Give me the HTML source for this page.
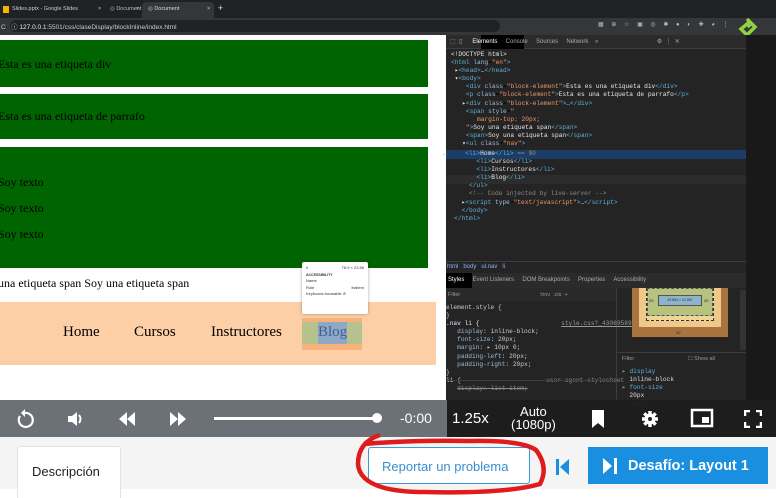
<!DOCTYPE html>
<html><head><meta charset="utf-8">
<style>
*{margin:0;padding:0;box-sizing:border-box}
body{width:776px;height:498px;overflow:hidden;background:#1f1f1f;font-family:"Liberation Sans",sans-serif;position:relative}
.a{position:absolute}
.mono{font-family:"Liberation Mono",monospace;font-size:6.2px;white-space:pre;line-height:8.1px}
.serif{font-family:"Liberation Serif",serif;color:#000}
.g{background:#006400}
.tag{color:#5db0d7}.at{color:#9bbbdc}.val{color:#f29766}.txt{color:#e8e8e8}.cm{color:#898989}
</style></head><body>
<!-- tab bar -->
<div class="a" style="left:0;top:0;width:776px;height:18px;background:#202124"></div>
<div class="a" style="left:142px;top:2px;width:72px;height:16px;background:#35363a;border-radius:4px 4px 0 0"></div>
<div class="a" style="left:3px;top:6px;width:6px;height:7px;background:#f4b400"></div>
<div class="a" style="left:12px;top:6px;font-size:5.5px;color:#ccc;white-space:pre">Slides.pptx - Google Slides</div>
<div class="a" style="left:98px;top:6px;font-size:5.5px;color:#ccc">×</div>
<div class="a" style="left:110px;top:6px;font-size:5.5px;color:#bbb;white-space:pre">◎ Document</div>
<div class="a" style="left:136px;top:6px;font-size:5.5px;color:#bbb">×</div>
<div class="a" style="left:148px;top:6px;font-size:5.5px;color:#ddd;white-space:pre">◎ Document</div>
<div class="a" style="left:207px;top:6px;font-size:5.5px;color:#ddd">×</div>
<div class="a" style="left:218px;top:3px;font-size:9px;color:#ddd">+</div>
<div class="a" style="left:0;top:18px;width:776px;height:17px;background:#35363a"></div>
<div class="a" style="left:10px;top:20px;width:490px;height:12px;background:#202124;border-radius:6px"></div>
<div class="a" style="left:1px;top:21px;font-size:6.5px;color:#ccc;white-space:pre">C   ⓘ <span style="color:#eee">127.0.0.1</span>:5501/css/claseDisplay/blockInline/index.html</div>
<div class="a" style="left:598px;top:21px;font-size:6px;color:#bbb;letter-spacing:3px">▦ ⊕ ☆ ▣ ◎ ✱ ● ◐ ✚ ◕ ⋮</div>
<svg class="a" style="left:736px;top:16px" width="22" height="26" viewBox="0 0 22 26"><path d="M11 3 L19 11 L11 19 L5 13 L11 8 L14 11" fill="none" stroke="#8fd13f" stroke-width="3.5"/></svg>
<!-- page -->
<div class="a" style="left:0;top:35px;width:446px;height:365px;background:#fff"></div>
<div class="a g" style="left:0;top:40px;width:428px;height:47px"></div>
<div class="a g" style="left:0;top:94px;width:428px;height:45px"></div>
<div class="a g" style="left:0;top:147px;width:428px;height:121px"></div>
<div class="a serif" style="left:-2px;top:57px;font-size:12px">Esta es una etiqueta div</div>
<div class="a serif" style="left:-2px;top:109px;font-size:12px">Esta es una etiqueta de parrafo</div>
<div class="a serif" style="left:-2px;top:175px;font-size:12px">Soy texto</div>
<div class="a serif" style="left:-2px;top:201px;font-size:12px">Soy texto</div>
<div class="a serif" style="left:-2px;top:227px;font-size:12px">Soy texto</div>
<div class="a serif" style="left:-2px;top:276px;font-size:12px">una etiqueta span Soy una etiqueta span</div>
<div class="a" style="left:0;top:302px;width:436px;height:63px;background:#fdcfa7"></div>
<div class="a" style="left:302px;top:318px;width:60px;height:32px;background:#f6b27a"></div>
<div class="a" style="left:302px;top:322px;width:60px;height:22px;background:#b5c28d"></div>
<div class="a" style="left:318px;top:322px;width:29px;height:22px;background:#8ea8c6"></div>
<div class="a serif" style="left:63px;top:324px;font-size:15px">Home</div>
<div class="a serif" style="left:134px;top:324px;font-size:15px">Cursos</div>
<div class="a serif" style="left:211px;top:324px;font-size:15px">Instructores</div>
<div class="a serif" style="left:318px;top:324px;font-size:15px;color:#3c5f8f">Blog</div>
<div class="a" style="left:302px;top:262px;width:66px;height:52px;background:#fff;box-shadow:0 0 3px rgba(0,0,0,.35);border-radius:2px;font-size:4px;color:#333;padding:3px 4px;line-height:6.5px">li<span style="float:right">78.9 × 22.86</span><br><b style="font-size:3.5px">ACCESSIBILITY</b><br>Name<br>Role<span style="float:right">listitem</span><br>Keyboard-focusable ⊘</div>
<!-- devtools -->
<div class="a" style="left:446px;top:35px;width:300px;height:365px;background:#242424"></div>
<div class="a" style="left:446px;top:35px;width:300px;height:14px;background:#2b2b2b;border-bottom:1px solid #3d3d3d"></div>
<div class="a" style="left:481px;top:35px;width:43px;height:14px;background:#000"></div>
<div class="a" style="left:450px;top:38px;font-size:6px;color:#aaa;white-space:pre">⬚  ▯      <span style="color:#fff">Elements</span>     Console     Sources     Network    »                                   ⚙  ⋮  ✕</div>
<div class="a mono" style="left:451px;top:51px"><span class="txt">&lt;!DOCTYPE html&gt;</span>
<span class="tag">&lt;html</span> <span class="at">lang</span>=<span class="val">"en"</span><span class="tag">&gt;</span>
 <span class="txt">▸</span><span class="tag">&lt;head&gt;</span><span class="txt">…</span><span class="tag">&lt;/head&gt;</span>
 <span class="txt">▾</span><span class="tag">&lt;body&gt;</span>
    <span class="tag">&lt;div</span> <span class="at">class</span>=<span class="val">"block-element"</span><span class="tag">&gt;</span><span class="txt">Esta es una etiqueta div</span><span class="tag">&lt;/div&gt;</span>
    <span class="tag">&lt;p</span> <span class="at">class</span>=<span class="val">"block-element"</span><span class="tag">&gt;</span><span class="txt">Esta es una etiqueta de parrafo</span><span class="tag">&lt;/p&gt;</span>
   <span class="txt">▸</span><span class="tag">&lt;div</span> <span class="at">class</span>=<span class="val">"block-element"</span><span class="tag">&gt;</span><span class="txt">…</span><span class="tag">&lt;/div&gt;</span>
    <span class="tag">&lt;span</span> <span class="at">style</span>=<span class="val">"</span>
       <span class="val">margin-top: 20px;</span>
    <span class="val">"</span><span class="tag">&gt;</span><span class="txt">Soy una etiqueta span</span><span class="tag">&lt;/span&gt;</span>
    <span class="tag">&lt;span&gt;</span><span class="txt">Soy una etiqueta span</span><span class="tag">&lt;/span&gt;</span>
   <span class="txt">▾</span><span class="tag">&lt;ul</span> <span class="at">class</span>=<span class="val">"nav"</span><span class="tag">&gt;</span></div>
<div class="a" style="left:446px;top:150px;width:300px;height:8.5px;background:#1c3d66"></div>
<div class="a" style="left:446px;top:175px;width:300px;height:8.5px;background:#2c2c2c"></div>
<div class="a mono" style="left:443px;top:150px"><span class="cm">…</span>     <span class="tag">&lt;li&gt;</span><span class="txt">Home</span><span class="tag">&lt;/li&gt;</span> <span class="cm">== $0</span>
         <span class="tag">&lt;li&gt;</span><span class="txt">Cursos</span><span class="tag">&lt;/li&gt;</span>
         <span class="tag">&lt;li&gt;</span><span class="txt">Instructores</span><span class="tag">&lt;/li&gt;</span>
         <span class="tag">&lt;li&gt;</span><span class="txt">Blog</span><span class="tag">&lt;/li&gt;</span>
       <span class="tag">&lt;/ul&gt;</span>
       <span class="cm">&lt;!-- Code injected by live-server --&gt;</span>
     <span class="txt">▸</span><span class="tag">&lt;script</span> <span class="at">type</span>=<span class="val">"text/javascript"</span><span class="tag">&gt;</span><span class="txt">…</span><span class="tag">&lt;/script&gt;</span>
     <span class="tag">&lt;/body&gt;</span>
   <span class="tag">&lt;/html&gt;</span></div>
<div class="a" style="left:446px;top:261px;width:300px;height:1px;background:#3d3d3d"></div>
<div class="a" style="left:447px;top:264px;font-size:6px;color:#8ab4f8;white-space:pre">html   body   ul.nav   li</div>
<div class="a" style="left:446px;top:273px;width:300px;height:15px;background:#2b2b2b"></div>
<div class="a" style="left:446px;top:273px;width:26px;height:15px;background:#000"></div>
<div class="a" style="left:448px;top:277px;font-size:6px;color:#aaa;white-space:pre"><span style="color:#fff">Styles</span>     Event Listeners     DOM Breakpoints     Properties     Accessibility</div>
<div class="a" style="left:616px;top:288px;width:1px;height:112px;background:#3d3d3d"></div>
<div class="a" style="left:446px;top:288px;width:170px;height:13px;background:#292929"></div>
<div class="a" style="left:448px;top:292px;font-size:5.5px;color:#999;white-space:pre">Filter                                                    :hov  .cls  +</div>
<div class="a mono" style="left:446px;top:304px;color:#ccc">element.style {
}
<span class="txt">.nav li {</span>                      <span style="color:#999;text-decoration:underline">style.css?_43069589:13</span>
   <span style="color:#9bbbdc">display</span>: inline-block;
   <span style="color:#9bbbdc">font-size</span>: 20px;
   <span style="color:#9bbbdc">margin</span>: ▸ 10px 0;
   <span style="color:#9bbbdc">padding-left</span>: 20px;
   <span style="color:#9bbbdc">padding-right</span>: 20px;
}
li {                       <span class="cm">user agent stylesheet</span>
   <span class="cm" style="text-decoration:line-through">display: list-item;</span></div>
<div class="a" style="left:446px;top:380px;width:170px;height:1px;background:#3d3d3d"></div>
<!-- box model -->
<div class="a" style="left:632px;top:288px;width:96px;height:49px;background:#a8733f"></div>
<div class="a" style="left:639px;top:288px;width:82px;height:39px;background:#f0c98a"></div>
<div class="a" style="left:646px;top:288px;width:68px;height:33px;background:#ecd79a;border:1px dashed #333"></div>
<div class="a" style="left:647px;top:288px;width:66px;height:28px;background:#b7c27f;border:1px dashed #555"></div>
<div class="a" style="left:658px;top:295px;width:44px;height:11px;background:#8fb3cb;border:1px solid #555;font-size:3.5px;color:#333;text-align:center;line-height:9px">49.884 × 22.857</div>
<div class="a" style="left:649px;top:298px;font-size:4px;color:#222">20</div>
<div class="a" style="left:704px;top:298px;font-size:4px;color:#222">20</div>
<div class="a" style="left:676px;top:330px;font-size:4px;color:#222">10</div>
<div class="a" style="left:617px;top:352px;width:130px;height:1px;background:#3d3d3d"></div>
<div class="a" style="left:622px;top:356px;font-size:5.5px;color:#999;white-space:pre">Filter                                   ☐ Show all</div>
<div class="a mono" style="left:622px;top:368px;color:#ddd"><span style="color:#5db0d7">▸ display</span>
  inline-block
<span style="color:#5db0d7">▸ font-size</span>
  20px
  <span class="cm">height</span></div>
<div class="a" style="left:746px;top:35px;width:30px;height:365px;background:#191919"></div>
<div class="a" style="left:740px;top:290px;width:6px;height:60px;background:#333"></div>
<!-- video controls -->
<div class="a" style="left:0;top:400px;width:447px;height:37px;background:#6c7077"></div>
<div class="a" style="left:447px;top:400px;width:329px;height:37px;background:rgba(30,30,30,.95)"></div>
<svg class="a" style="left:14px;top:408px" width="22" height="22" viewBox="0 0 22 22"><path d="M6 8 A7 7 0 1 0 11 5" fill="none" stroke="#fff" stroke-width="2.2"/><path d="M11 1 L11 9 L7 5Z" fill="#fff"/></svg>
<svg class="a" style="left:66px;top:410px" width="20" height="18" viewBox="0 0 20 18"><path d="M2 6H6L11 2V16L6 12H2Z" fill="#fff"/><path d="M13 5Q16 9 13 13" stroke="#fff" stroke-width="2" fill="none"/></svg>
<svg class="a" style="left:117px;top:410px" width="20" height="18" viewBox="0 0 20 18"><path d="M10 2V16L2 9Z M18 2V16L10 9Z" fill="#fff"/></svg>
<svg class="a" style="left:168px;top:410px" width="20" height="18" viewBox="0 0 20 18"><path d="M2 2V16L10 9Z M10 2V16L18 9Z" fill="#fff"/></svg>
<div class="a" style="left:214px;top:417px;width:163px;height:3px;background:#fff"></div>
<div class="a" style="left:372px;top:413px;width:10px;height:10px;border-radius:50%;background:#fff"></div>
<div class="a" style="left:400px;top:410px;font-size:14px;color:#fff">-0:00</div>
<div class="a" style="left:452px;top:410px;font-size:15px;color:#fff">1.25x</div>
<div class="a" style="left:511px;top:405px;font-size:13px;color:#fff;text-align:center;line-height:13px">Auto<br>(1080p)</div>
<svg class="a" style="left:590px;top:409px" width="16" height="20" viewBox="0 0 16 20"><path d="M2 1H14V19L8 14L2 19Z" fill="#fff"/></svg>
<svg class="a" style="left:641px;top:410px" width="18" height="18" viewBox="0 0 18 18"><g stroke="#fff" stroke-width="3.5"><line x1="9" y1="1" x2="9" y2="17"/><line x1="1" y1="9" x2="17" y2="9"/><line x1="3.3" y1="3.3" x2="14.7" y2="14.7"/><line x1="14.7" y1="3.3" x2="3.3" y2="14.7"/></g><circle cx="9" cy="9" r="5.5" fill="#fff"/><circle cx="9" cy="9" r="2" fill="#222"/></svg>
<svg class="a" style="left:690px;top:408px" width="24" height="20" viewBox="0 0 24 20"><rect x="2" y="2" width="20" height="16" fill="none" stroke="#fff" stroke-width="2.5"/><rect x="12" y="9" width="7" height="6" fill="#fff"/></svg>
<svg class="a" style="left:744px;top:410px" width="18" height="18" viewBox="0 0 18 18"><path d="M1 6V1H6 M12 1H17V6 M17 12V17H12 M6 17H1V12" fill="none" stroke="#fff" stroke-width="2.5"/></svg>
<!-- bottom -->
<div class="a" style="left:0;top:437px;width:776px;height:61px;background:#f4f4f4"></div>
<div class="a" style="left:0;top:489px;width:776px;height:9px;background:#fff"></div>
<div class="a" style="left:17px;top:446px;width:104px;height:52px;background:#fff;border:1px solid #e3e3e3;border-bottom:none;border-radius:3px 3px 0 0"></div>
<div class="a" style="left:32px;top:464px;font-size:13px;color:#222">Descripción</div>
<div class="a" style="left:368px;top:447px;width:162px;height:37px;background:#fff;border:1px solid #3a9ad9;border-radius:3px"></div>
<div class="a" style="left:382px;top:459px;font-size:13px;color:#3a8fcf">Reportar un problema</div>
<svg class="a" style="left:554px;top:457px" width="18" height="20" viewBox="0 0 18 20"><rect x="2" y="2" width="3" height="16" fill="#1a8fe0"/><path d="M15 2V18L6 10Z" fill="#1a8fe0"/></svg>
<div class="a" style="left:588px;top:447px;width:180px;height:37px;background:#1a8fe0"></div>
<svg class="a" style="left:600px;top:456px" width="20" height="20" viewBox="0 0 20 20"><path d="M3 2V18L12 10Z" fill="#fff"/><rect x="14" y="2" width="3" height="16" fill="#fff"/></svg>
<div class="a" style="left:628px;top:458px;font-size:14.5px;font-weight:bold;color:#fff">Desafío: Layout 1</div>
<svg class="a" style="left:350px;top:432px" width="200" height="64" viewBox="0 0 200 64"><path d="M30 3 Q8 10 8 32 Q10 60 75 60 Q155 62 190 52 Q199 35 186 18 Q172 8 120 9 Q60 8 14 12" fill="none" stroke="#e01b1b" stroke-width="4.5"/></svg>
</body></html>
